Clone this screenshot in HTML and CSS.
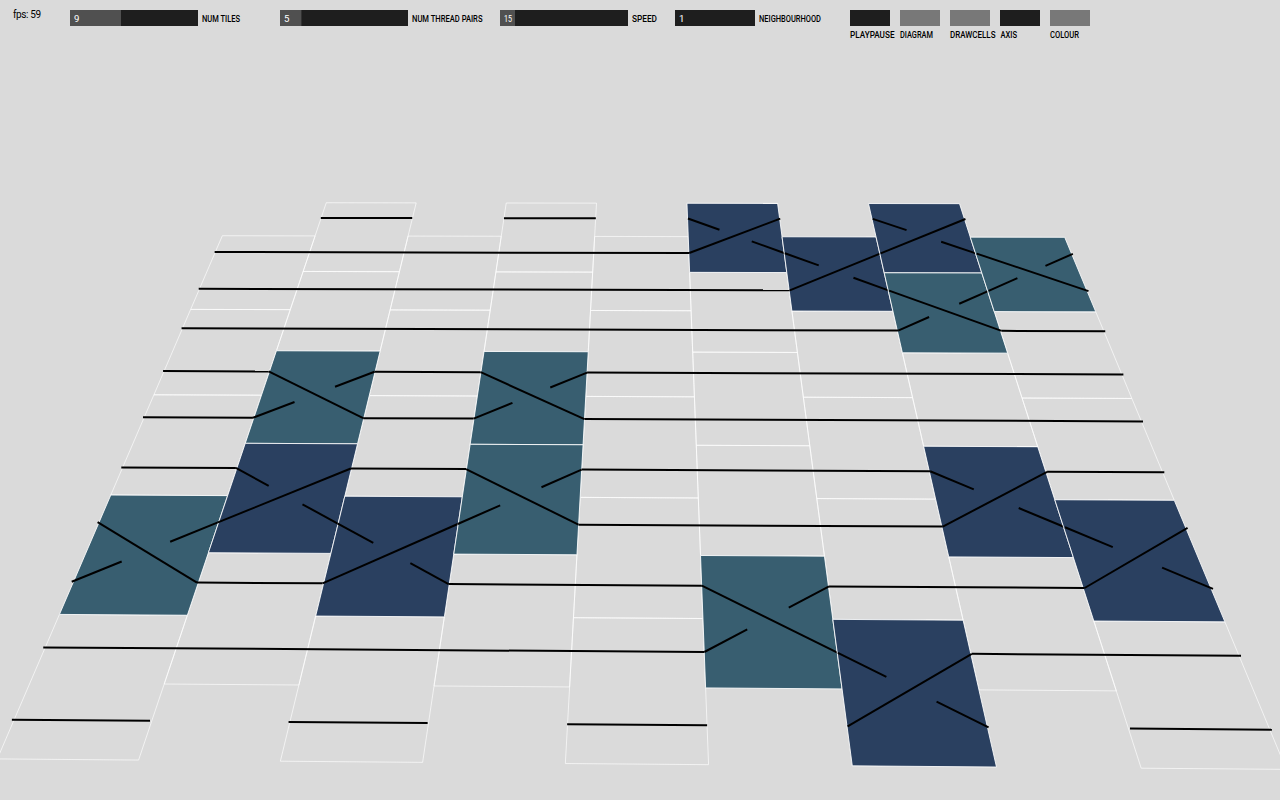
FILE: index.html
```html
<!DOCTYPE html>
<html lang="en">
<head>
<meta charset="utf-8">
<title>Braid automaton</title>
<link rel="stylesheet" href="styles.css">
</head>
<body>
<header class="controls">
  <svg class="text fps"><text x="0" y="8" textLength="28">fps: 59</text></svg>
  <div class="slider tiles">
    <div class="track"><div class="fill" style="width:51px"></div><svg class="text value"><text x="0" y="8">9</text></svg></div>
    <svg class="text"><text x="0" y="8" textLength="38" lengthAdjust="spacingAndGlyphs">NUM TILES</text></svg>
  </div>
  <div class="slider pairs">
    <div class="track"><div class="fill edged" style="width:22px"></div><svg class="text value"><text x="0" y="8">5</text></svg></div>
    <svg class="text"><text x="0" y="8" textLength="70.5" lengthAdjust="spacingAndGlyphs">NUM THREAD PAIRS</text></svg>
  </div>
  <div class="slider speed">
    <div class="track"><div class="fill" style="width:15px"></div><svg class="text value"><text x="0" y="8" textLength="8" lengthAdjust="spacingAndGlyphs">15</text></svg></div>
    <svg class="text"><text x="0" y="8" textLength="25" lengthAdjust="spacingAndGlyphs">SPEED</text></svg>
  </div>
  <div class="slider hood">
    <div class="track"><svg class="text value"><text x="0" y="8">1</text></svg></div>
    <svg class="text"><text x="0" y="8" textLength="62" lengthAdjust="spacingAndGlyphs">NEIGHBOURHOOD</text></svg>
  </div>
  <div class="toggles">
    <div class="toggle"><div class="box"></div><svg class="text"><text x="0" y="8" textLength="44.5" lengthAdjust="spacingAndGlyphs">PLAYPAUSE</text></svg></div>
    <div class="toggle on"><div class="box"></div><svg class="text"><text x="0" y="8" textLength="33" lengthAdjust="spacingAndGlyphs">DIAGRAM</text></svg></div>
    <div class="toggle on"><div class="box"></div><svg class="text"><text x="0" y="8" textLength="45.5" lengthAdjust="spacingAndGlyphs">DRAWCELLS</text></svg></div>
    <div class="toggle"><div class="box"></div><svg class="text"><text x="0.5" y="8" textLength="16.5" lengthAdjust="spacingAndGlyphs">AXIS</text></svg></div>
    <div class="toggle on"><div class="box"></div><svg class="text"><text x="0" y="8" textLength="29" lengthAdjust="spacingAndGlyphs">COLOUR</text></svg></div>
  </div>
</header>
<svg class="scene" id="scene" viewBox="0 50 1280 750"></svg>
<script src="braid.js"></script>
</body>
</html>
```
FILE: styles.css
```css
body {
  margin: 0;
  display: flex;
  flex-direction: column;
  height: 800px;
  overflow: hidden;
  background: #dadada;
}

.controls {
  box-sizing: border-box;
  display: grid;
  grid-template-columns: 57px 210px 220px 175px 175px auto;
  height: 50px;
  padding: 10px 0 0 13px;
}

.text {
  display: block;
  width: 1px;
  height: 10px;
  overflow: visible;
  fill: #000;
  font: 500 9.6px Roboto, "Liberation Sans", sans-serif;
}

.fps { font-weight: 400; font-size: 10px; }

.slider {
  display: flex;
  align-items: flex-start;
  gap: 3.5px;
}

.slider > .text { margin-top: 4px; }

.track {
  display: grid;
  width: 128px;
  height: 16px;
  background: #1e1e1e;
}

.hood .track { width: 80px; }

.track > * { grid-area: 1 / 1; }

.fill { box-sizing: border-box; background: #505050; }

.edged { border-right: 1px solid #323232; }

.value {
  margin: 4px 0 0 3.5px;
  fill: #fff;
  font-weight: 400;
}

.toggles { display: flex; gap: 10px; }

.toggle { width: 40px; }

.toggle .text { margin: 4px 0 0 -0.5px; }

.box { height: 16px; background: #1e1e1e; }

.on .box { background: #787878; }

.scene {
  width: 1280px;
  height: 750px;
}

.cell { fill: none; stroke: rgba(255, 255, 255, 0.65); stroke-width: 1; }
.cell.over { fill: #2a4060; stroke: rgba(255, 255, 255, 0.85); }
.cell.under { fill: #385e70; stroke: rgba(255, 255, 255, 0.85); }

.thread { fill: none; stroke: #000; stroke-width: 2; }
```
FILE: braid.js
```js
// Perspective projections of the cell plane and of the threads just above it.
const CELL_PLANE = [89.3416717, -21.6644099, 236.588246, -0.0853294, 25.2767553, 202.6084599, -0.0010674, -0.0333325];
const THREAD_PLANE = [89.3973771, -21.7964933, 236.5706664, -0.0856136, 25.266606, 201.455579, -0.0010937, -0.0334786];

// One string per column: "." straight, "N" right thread over, "T" left thread over.
const COLUMNS = ["...T.", "..TN.", "...N.", "..TT.", ".....", "N...T", "N...N", "NT.N.", "T..N."];

const project = (m, [c, r]) => {
  const w = 1 + m[6] * c + m[7] * r;
  return [(m[0] * c + m[1] * r + m[2]) / w, (m[3] * c + m[4] * r + m[5]) / w]
    .map(v => v.toFixed(2)).join(" ");
};

const path = (cls, plane, points, close = "") =>
  `<path class="${cls}" d="M${points.map(p => project(plane, p)).join("L")}${close}"/>`;

const thread = (c, r, dr, from, to) =>
  path("thread", THREAD_PLANE, [[c + from, r + dr * from], [c + to, r + dr * to]]);

// Empty outlines go beneath; straight threads are joined into runs per row.
let outlines = "";
let braid = "";
const runs = {};
COLUMNS.forEach((column, c) => {
  [...column].forEach((kind, i) => {
    const r = i * 2 + (c % 2 ? 0 : 1);
    const cls = { N: "cell over", T: "cell under", ".": "cell" }[kind];
    const cell = path(cls, CELL_PLANE, [[c, r], [c + 1, r], [c + 1, r + 2], [c, r + 2]], "Z");
    if (kind === ".") {
      outlines += cell;
      for (const row of [r + 0.5, r + 1.5]) {
        const list = runs[row] = runs[row] || [];
        const last = list[list.length - 1];
        if (last && last[1] === c) last[1] = c + 1;
        else list.push([c, c + 1]);
      }
    } else {
      const [top, bottom] = [[r + 0.5, 1], [r + 1.5, -1]];
      const [front, back] = kind === "N" ? [bottom, top] : [top, bottom];
      braid += cell + thread(c, ...front, 0, 1) + thread(c, ...back, 0, 1 / 3) + thread(c, ...back, 2 / 3, 1);
    }
  });
});
for (const [row, list] of Object.entries(runs)) {
  for (const [from, to] of list) {
    braid += path("thread", THREAD_PLANE, [[from, +row], [to, +row]]);
  }
}
document.getElementById("scene").innerHTML = outlines + braid;
```
